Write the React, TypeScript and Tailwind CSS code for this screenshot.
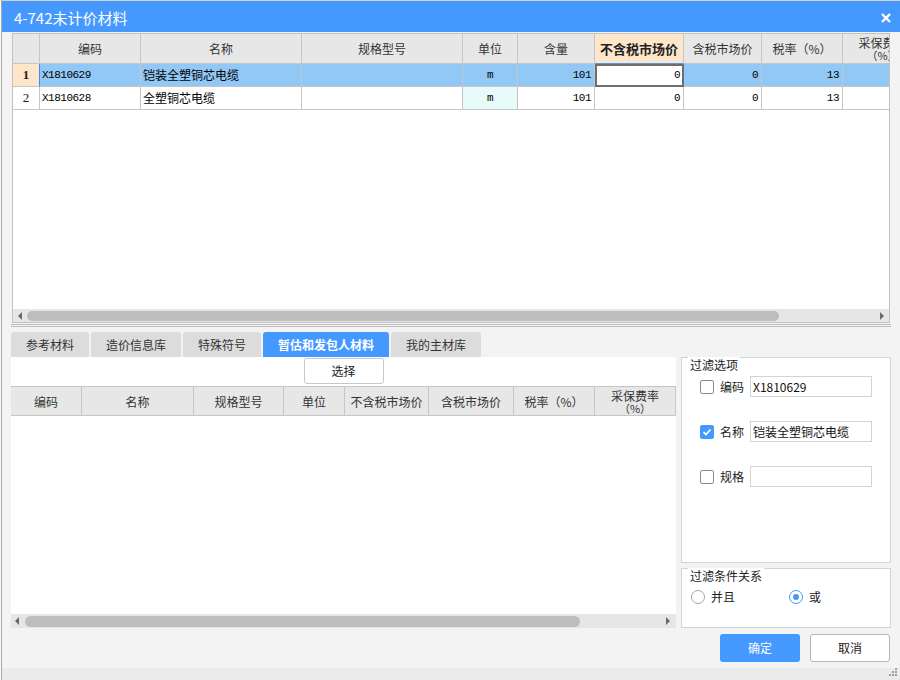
import React from 'react';

const cjk = "font-['Noto_Sans_CJK_SC',sans-serif]";
const mono = "font-['Liberation_Mono',monospace] text-[11px] tracking-[-0.5px] text-black";

function LeftArrow() {
  return (
    <svg width="4" height="8" viewBox="0 0 4 8" className="shrink-0">
      <path d="M4 0 L0 4 L4 8Z" fill="#6a6a6a" />
    </svg>
  );
}
function RightArrow() {
  return (
    <svg width="4" height="8" viewBox="0 0 4 8" className="shrink-0">
      <path d="M0 0 L4 4 L0 8Z" fill="#6a6a6a" />
    </svg>
  );
}

type Col = { w: string; label?: string; sub?: string; hl?: boolean };

const topCols: Col[] = [
  { w: 'w-[27px]' },
  { w: 'w-[101px]', label: '编码' },
  { w: 'w-[161px]', label: '名称' },
  { w: 'w-[161px]', label: '规格型号' },
  { w: 'w-[55px]', label: '单位' },
  { w: 'w-[77px]', label: '含量' },
  { w: 'w-[89px]', label: '不含税市场价', hl: true },
  { w: 'w-[78px]', label: '含税市场价' },
  { w: 'w-[81px]', label: '税率（%）' },
  { w: 'w-[80px]', label: '采保费率', sub: '（%）' },
];

const botCols: Col[] = [
  { w: 'w-[71px]', label: '编码' },
  { w: 'w-[112px]', label: '名称' },
  { w: 'w-[90px]', label: '规格型号' },
  { w: 'w-[61px]', label: '单位' },
  { w: 'w-[84px]', label: '不含税市场价' },
  { w: 'w-[85px]', label: '含税市场价' },
  { w: 'w-[81px]', label: '税率（%）' },
  { w: 'w-[81px]', label: '采保费率', sub: '（%）' },
];

function HeaderCell({ c }: { c: Col }) {
  if (c.hl) {
    return (
      <div className={`${c.w} shrink-0 h-full flex items-center justify-center border-r border-[#c6c6c6] border-b border-b-[#4a9cf0] bg-[#fde6c9] text-[13px] font-bold text-[#222]`}>
        {c.label}
      </div>
    );
  }
  return (
    <div className={`${c.w} shrink-0 h-full flex flex-col items-center justify-center border-r border-b border-[#c6c6c6] bg-[#e7e7e7] text-[12px] text-[#333] leading-[13px]`}>
      <span>{c.label}</span>
      {c.sub && <span className="text-[11px] leading-[12px]">{c.sub}</span>}
    </div>
  );
}

function Cell({ w, children, cls = '' }: { w: string; children?: React.ReactNode; cls?: string }) {
  return <div className={`${w} shrink-0 h-full flex items-center border-r border-b border-[#c6c6c6] ${cls}`}>{children}</div>;
}

function Row({ sel }: { sel: boolean }) {
  const bg = sel ? 'bg-[#92c8f5]' : 'bg-white';
  return (
    <div className="h-[23px] flex shrink-0">
      <Cell
        w="w-[27px]"
        cls={`justify-center font-['Liberation_Serif',serif] text-[13px] ${sel ? 'bg-[#fde6c9] font-bold border-r-[#3d8fe8]' : 'bg-white'}`}
      >
        {sel ? '1' : '2'}
      </Cell>
      <Cell w="w-[101px]" cls={`${bg} pl-[2px] ${mono}`}>{sel ? 'X1810629' : 'X1810628'}</Cell>
      <Cell w="w-[161px]" cls={`${bg} pl-[2px] text-[12px] text-black`}>{sel ? '铠装全塑铜芯电缆' : '全塑铜芯电缆'}</Cell>
      <Cell w="w-[161px]" cls={bg} />
      <Cell w="w-[55px]" cls={`${sel ? bg : 'bg-[#e8fbfb]'} justify-center ${mono}`}>m</Cell>
      <Cell w="w-[77px]" cls={`${bg} justify-end pr-[3px] ${mono}`}>101</Cell>
      {sel ? (
        <div className={`w-[89px] shrink-0 h-full flex items-center justify-end pr-[2px] bg-white border-2 border-[#6e6e6e] ${mono}`}>0</div>
      ) : (
        <Cell w="w-[89px]" cls={`${bg} justify-end pr-[3px] ${mono}`}>0</Cell>
      )}
      <Cell w="w-[78px]" cls={`${bg} justify-end pr-[3px] ${mono}`}>0</Cell>
      <Cell w="w-[81px]" cls={`${bg} justify-end pr-[3px] ${mono}`}>13</Cell>
      <Cell w="w-[80px]" cls={bg} />
    </div>
  );
}

function CheckBox({ checked }: { checked?: boolean }) {
  if (checked) {
    return (
      <div className="w-[14px] h-[14px] shrink-0 rounded-[2px] bg-[#4599fe] flex items-center justify-center">
        <svg width="10" height="10" viewBox="0 0 10 10">
          <path d="M1.5 5.2 L4 7.5 L8.5 2.5" stroke="white" strokeWidth="1.8" fill="none" />
        </svg>
      </div>
    );
  }
  return <div className="w-[14px] h-[14px] shrink-0 rounded-[2px] bg-white border border-[#8c8c8c]" />;
}

function FilterRow({ label, value, checked }: { label: string; value: string; checked?: boolean }) {
  return (
    <div className="flex items-center pl-[18px] h-[21px]">
      <CheckBox checked={checked} />
      <span className="ml-[6px] w-[24px] text-[12px] text-[#222] leading-[14px]">{label}</span>
      <div className="ml-[6px] w-[122px] h-[21px] border border-[#d4d4d4] bg-white flex items-center pl-[2px] text-[12px] text-[#111]">
        {value}
      </div>
    </div>
  );
}

function Legend({ text }: { text: string }) {
  return (
    <div className="flex">
      <span className="ml-[6px] -mt-px bg-white px-[2px] leading-[16px] text-[12px] text-[#222]">{text}</span>
    </div>
  );
}

export default function App() {
  return (
    <div className={`w-[900px] h-[680px] flex bg-white ${cjk} text-[12px] text-[#222] overflow-hidden`}>
      <div className="w-[2px] shrink-0 bg-[#fafafa] border-r border-[#a8a8a8]" />
      <div className="flex-1 flex flex-col border-t border-[#d0d0d0] min-w-0">
        {/* Title bar */}
        <div className="h-[31px] shrink-0 bg-[#4599fe] flex items-center justify-between pl-[12px] pr-[9px] pt-[3px]">
          <span className="text-white text-[15px] leading-[20px]">4-742未计价材料</span>
          <svg width="10" height="10" viewBox="0 0 10 10">
            <path d="M1 1 L9 9 M9 1 L1 9" stroke="white" strokeWidth="2.4" />
          </svg>
        </div>

        <div className="flex-1 flex flex-col bg-[#f3f3f3]">
          {/* top grid */}
          <div className="ml-[10px] mt-[1px] w-[878px] h-[290px] shrink-0 border border-[#c2c2c2] bg-white flex flex-col overflow-hidden">
            <div className="h-[30px] flex shrink-0">
              {topCols.map((c, i) => (
                <HeaderCell key={i} c={c} />
              ))}
            </div>
            <Row sel={true} />
            <Row sel={false} />
            <div className="flex-1" />
            <div className="h-[13px] shrink-0 bg-[#e6e6e6] flex items-center">
              <div className="ml-[5px]"><LeftArrow /></div>
              <div className="ml-[5px] w-[752px] h-[10px] rounded-full bg-[#bdbdbd]" />
              <div className="flex-1" />
              <div className="mr-[5px]"><RightArrow /></div>
            </div>
          </div>

          {/* splitter */}
          <div className="ml-[9px] mt-[1px] w-[880px] h-[3px] shrink-0 border-t border-b border-[#bdbdbd]" />

          {/* tabs */}
          <div className="ml-[9px] mt-[5px] h-[25px] shrink-0 flex gap-[2px]">
            <div className="w-[78px] rounded-t-[3px] bg-[#dcdcdc] flex items-center justify-center text-[12px] text-[#333]">参考材料</div>
            <div className="w-[90px] rounded-t-[3px] bg-[#dcdcdc] flex items-center justify-center text-[12px] text-[#333]">造价信息库</div>
            <div className="w-[78px] rounded-t-[3px] bg-[#dcdcdc] flex items-center justify-center text-[12px] text-[#333]">特殊符号</div>
            <div className="w-[126px] rounded-t-[3px] bg-[#4599fe] flex items-center justify-center text-[12px] text-white font-bold">暂估和发包人材料</div>
            <div className="w-[90px] rounded-t-[3px] bg-[#dcdcdc] flex items-center justify-center text-[12px] text-[#333]">我的主材库</div>
          </div>

          {/* content region */}
          <div className="ml-[9px] h-[271px] shrink-0 flex gap-[5px]">
            <div className="w-[665px] h-full bg-white flex flex-col">
              <div className="mt-[1px] flex justify-center">
                <div className="w-[80px] h-[26px] rounded-[3px] border border-[#c8c8c8] bg-white flex items-center justify-center text-[12px] text-[#222]">选择</div>
              </div>
              <div className="mt-[2px] h-[30px] shrink-0 flex border-t border-[#c6c6c6]">
                {botCols.map((c, i) => (
                  <HeaderCell key={i} c={c} />
                ))}
              </div>
              <div className="flex-1" />
              <div className="h-[14px] shrink-0 bg-[#e6e6e6] flex items-center">
                <div className="ml-[4px]"><LeftArrow /></div>
                <div className="ml-[6px] w-[555px] h-[11px] rounded-full bg-[#bdbdbd]" />
                <div className="flex-1" />
                <div className="mr-[6px]"><RightArrow /></div>
              </div>
            </div>

            <div className="w-[210px] h-full flex flex-col gap-[5px]">
              <div className="h-[206px] border border-[#d4d4d4] bg-white flex flex-col">
                <Legend text="过滤选项" />
                <div className="mt-[3px] flex flex-col gap-[24px]">
                  <FilterRow label="编码" value="X1810629" />
                  <FilterRow label="名称" value="铠装全塑铜芯电缆" checked />
                  <FilterRow label="规格" value="" />
                </div>
              </div>
              <div className="h-[60px] border border-[#d4d4d4] bg-white flex flex-col">
                <Legend text="过滤条件关系" />
                <div className="mt-[6px] flex items-center pl-[9px] h-[14px]">
                  <div className="w-[98px] flex items-center">
                    <div className="w-[14px] h-[14px] rounded-full border border-[#a6a6a6] bg-white" />
                    <span className="ml-[6px] text-[12px] text-[#222] leading-[14px]">并且</span>
                  </div>
                  <div className="flex items-center">
                    <div className="w-[14px] h-[14px] rounded-full border border-[#4599fe] bg-white flex items-center justify-center">
                      <div className="w-[6px] h-[6px] rounded-full bg-[#4599fe]" />
                    </div>
                    <span className="ml-[6px] text-[12px] text-[#222] leading-[14px]">或</span>
                  </div>
                </div>
              </div>
            </div>
          </div>

          {/* buttons */}
          <div className="mt-[6px] h-[28px] shrink-0 flex justify-end pr-[10px] gap-[10px]">
            <div className="w-[80px] h-full rounded-[3px] bg-[#4599fe] flex items-center justify-center text-[12px] text-white">确定</div>
            <div className="w-[80px] h-full rounded-[3px] border border-[#b8b8b8] bg-white flex items-center justify-center text-[12px] text-[#222]">取消</div>
          </div>

          <div className="mt-[6px] h-[12px] shrink-0 bg-[#ebebeb] flex justify-end items-end">
            <svg width="12" height="12" viewBox="0 0 12 12" className="mr-[2px] mb-[1px]">
              <rect x="9" y="1" width="2" height="2" fill="#a0a0a0" />
              <rect x="6" y="4" width="2" height="2" fill="#a0a0a0" />
              <rect x="9" y="4" width="2" height="2" fill="#a0a0a0" />
              <rect x="3" y="7" width="2" height="2" fill="#a0a0a0" />
              <rect x="6" y="7" width="2" height="2" fill="#a0a0a0" />
              <rect x="9" y="7" width="2" height="2" fill="#a0a0a0" />
            </svg>
          </div>
        </div>
      </div>
    </div>
  );
}
